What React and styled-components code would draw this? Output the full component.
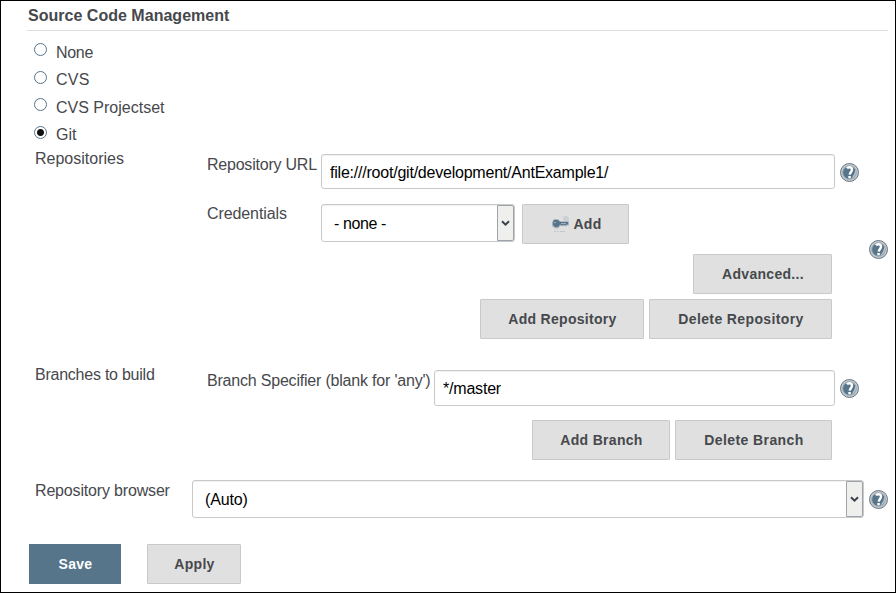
import React from "react";
import styled, { createGlobalStyle } from "styled-components";

const GlobalStyle = createGlobalStyle`
  body { margin: 0; background: #fff; }
  *, *::before, *::after { box-sizing: border-box; }
`;

const Page = styled.form`
  width: 896px;
  height: 593px;
  border: 1px solid #000;
  background: #fff;
  padding: 0 7px 0 27px;
  display: flex;
  flex-direction: column;
  font: 16px/20px "Liberation Sans", Arial, sans-serif;
  color: #46484c;
  overflow: hidden;
`;

const Heading = styled.h1`
  margin: 0 0 0 -1px;
  height: 30px;
  padding: 5px 0 0 1px;
  border-bottom: 1px solid #dcdcdc;
  font-size: 16px;
  line-height: 20px;
  letter-spacing: 0.02px;
  flex: none;
`;

const RadioList = styled.div`
  display: grid;
  grid-template-rows: 27px 28px 27px 24px;
  padding: 12px 0 0 6px;
`;

const RadioRow = styled.label`
  display: flex;
  align-items: flex-start;
  gap: 9px;
`;

const Radio = styled.input`
  appearance: none;
  width: 13px;
  height: 13px;
  margin: ${(p) => p.$drop}px 0 0;
  border: 1px solid #56748a;
  border-radius: 50%;
  background: ${(p) => (p.checked ? "radial-gradient(circle, #111 0 3px, #fff 4px)" : "#fff")};
`;

const RadioText = styled.span`
  letter-spacing: ${(p) => p.$tracking || 0}px;
`;

const Section = styled.section`
  display: flex;
  height: ${(p) => p.$height}px;
  padding-left: 7px;
  flex: none;
`;

const SectionLabel = styled.div`
  width: ${(p) => p.$width || 172}px;
  padding-top: ${(p) => p.$drop || 0}px;
  letter-spacing: ${(p) => p.$tracking || 0}px;
  flex: none;
`;

const Content = styled.div`
  width: 652px;
  margin-right: 10px;
  padding-top: 5px;
  flex: none;
`;

const Field = styled.div`
  display: flex;
  align-items: flex-start;
  height: ${(p) => p.$height}px;
`;

const FieldLabel = styled.label`
  width: ${(p) => p.$width}px;
  padding-top: ${(p) => p.$drop || 0}px;
  letter-spacing: ${(p) => p.$tracking || 0}px;
  white-space: nowrap;
  flex: none;
`;

const TextInput = styled.input`
  flex: 1;
  min-width: 0;
  height: ${(p) => p.$height}px;
  margin: 0 5px 0 0;
  padding: ${(p) => p.$drop || 1}px 8px 0;
  border: 1px solid #c9c9c9;
  border-radius: 3px;
  background: #fff;
  box-shadow: inset 0 1px 1px #f1f1f1;
  color: #000;
  font: inherit;
  letter-spacing: ${(p) => p.$tracking || 0}px;
  outline: none;
`;

const SelectBox = styled.div`
  display: flex;
  width: ${(p) => p.$width}px;
  height: 38px;
  margin-right: ${(p) => p.$after}px;
  padding-left: 12px;
  border: 1px solid #c9c9c9;
  border-radius: 3px;
  box-shadow: inset 0 1px 1px #f1f1f1;
  color: #000;
  line-height: 37px;
  letter-spacing: ${(p) => p.$tracking || 0}px;
  flex: none;
`;

const ArrowCell = styled.span`
  display: flex;
  align-items: center;
  justify-content: center;
  width: 17px;
  margin-left: auto;
  border: 1px solid #9da3aa;
  border-radius: 0 2px 2px 0;
  background: #efefed;
`;

const Button = styled.button`
  display: flex;
  align-items: center;
  justify-content: center;
  gap: 3px;
  width: ${(p) => p.$width}px;
  height: 40px;
  margin: 0;
  padding: 0 0 0 ${(p) => p.$inset ?? 1}px;
  border: 1px solid ${(p) => (p.$primary ? "#56748a" : "#c9c9c9")};
  border-radius: ${(p) => (p.$primary ? 0 : 1)}px;
  background: ${(p) => (p.$primary ? "#56748a" : "#e0e0e0")};
  color: ${(p) => (p.$primary ? "#fff" : "#46484c")};
  font: bold 14px/20px "Liberation Sans", Arial, sans-serif;
  letter-spacing: ${(p) => p.$tracking ?? 0.3}px;
  flex: none;
`;

const ButtonBar = styled.div`
  display: flex;
  justify-content: flex-end;
  gap: 5px;
  padding-right: 27px;
  margin-bottom: 5px;
`;

const Footer = styled.div`
  display: flex;
  gap: 26px;
  padding-left: 1px;
`;

const HelpSvg = styled.svg`
  display: block;
  margin-top: ${(p) => p.$drop}px;
  flex: none;
`;

function Help({ drop }) {
  return (
    <HelpSvg $drop={drop} width="19" height="19" viewBox="0 0 19 19" role="img" aria-label="Help">
      <circle cx="9.5" cy="9.5" r="9" fill="#c5c8cc" stroke="#667887" />
      <circle cx="9.5" cy="9.5" r="6.8" fill="#56748a" stroke="#9eabb5" />
      <path d="M11 15.600a6.400 6.400 0 0 0 4.300-9.200c-.3 3.700-1.800 6.300-4.300 9.200z" fill="#bcc5cb" />
      <path d="M7 5.300C8 3.700 12.200 3.700 12 6.700c-.1 2-2.100 2.500-2.300 5" fill="none" stroke="#fff" strokeWidth="2.400" />
      <path d="M8.300 13h2.500v2.300H8.300z" fill="#fff" />
    </HelpSvg>
  );
}

function KeyIcon() {
  return (
    <svg width="18" height="18" viewBox="0 0 18 18" aria-hidden="true">
      <path d="M11 5V2l2-1h2l2 2v3l-2 1-3-1z" fill="#cdd0d2" />
      <path d="M2 16.500h2m1 0h2m1 0h5" stroke="#c4c6c8" />
      <path d="M0 7l2-3h4l2 2 9 .5v4h-2l-1 1-2-1-1 1-2-1-1 1-2 2H3L0 11z" fill="#a9b5bd" />
      <path d="M2 5h4l2 2h8v2.500h-2l-1 1-2-1-1 1-2-1-2 2.500H3L1 10V7z" fill="#56748a" />
      <path d="M2 7.500h2M9 8.500h5" stroke="#9eb0bc" />
    </svg>
  );
}

function Select({ value, width, after, tracking }) {
  return (
    <SelectBox $width={width} $after={after} $tracking={tracking} role="combobox" aria-expanded="false">
      {value}
      <ArrowCell>
        <svg width="9" height="7" viewBox="0 0 9 7" aria-hidden="true">
          <path d="M1 1.200l3.500 3.500L8 1.200" fill="none" stroke="#38434d" strokeWidth="2" />
        </svg>
      </ArrowCell>
    </SelectBox>
  );
}

const sources = [
  { name: "None", drop: 0, tracking: -0.3 },
  { name: "CVS", drop: 1, tracking: 0.2 },
  { name: "CVS Projectset", drop: 0 },
  { name: "Git", drop: 1 },
];

export default function App() {
  return (
    <>
      <GlobalStyle />
      <Page>
        <Heading>Source Code Management</Heading>
        <RadioList>
          {sources.map(({ name, drop, tracking }) => (
            <RadioRow key={name}>
              <Radio type="radio" name="scm" $drop={drop} checked={name === "Git"} readOnly />
              <RadioText $tracking={tracking}>{name}</RadioText>
            </RadioRow>
          ))}
        </RadioList>
        <Section $height={216}>
          <SectionLabel>Repositories</SectionLabel>
          <Content>
            <Field $height={50}>
              <FieldLabel $width={114} $drop={1} $tracking={-0.22}>Repository URL</FieldLabel>
              <TextInput $height={35} $drop={2} $tracking={-0.22} defaultValue="file:///root/git/development/AntExample1/" />
              <Help drop={9} />
            </Field>
            <Field $height={50}>
              <FieldLabel $width={114} $tracking={-0.1}>Credentials</FieldLabel>
              <Select value="- none -" width={194} after={7} tracking={-0.4} />
              <Button type="button" $width={107} $inset={3}><KeyIcon />Add</Button>
            </Field>
            <ButtonBar>
              <Button type="button" $width={139}>Advanced...</Button>
            </ButtonBar>
            <ButtonBar>
              <Button type="button" $width={164}>Add Repository</Button>
              <Button type="button" $width={183} $tracking={0.38}>Delete Repository</Button>
            </ButtonBar>
          </Content>
          <Help drop={91} />
        </Section>
        <Section $height={115}>
          <SectionLabel $tracking={-0.24}>Branches to build</SectionLabel>
          <Content>
            <Field $height={50}>
              <FieldLabel $width={227} $drop={1} $tracking={-0.2}>Branch Specifier (blank for 'any')</FieldLabel>
              <TextInput $height={36} $tracking={-0.2} defaultValue="*/master" />
              <Help drop={9} />
            </Field>
            <ButtonBar>
              <Button type="button" $width={138}>Add Branch</Button>
              <Button type="button" $width={157} $tracking={0.4}>Delete Branch</Button>
            </ButtonBar>
          </Content>
        </Section>
        <Section $height={64}>
          <SectionLabel $width={157} $drop={1} $tracking={-0.17}>Repository browser</SectionLabel>
          <Select value="(Auto)" width={672} after={5} tracking={-0.15} />
          <Help drop={10} />
        </Section>
        <Footer>
          <Button type="button" $width={92} $primary>Save</Button>
          <Button type="button" $width={94}>Apply</Button>
        </Footer>
      </Page>
    </>
  );
}
